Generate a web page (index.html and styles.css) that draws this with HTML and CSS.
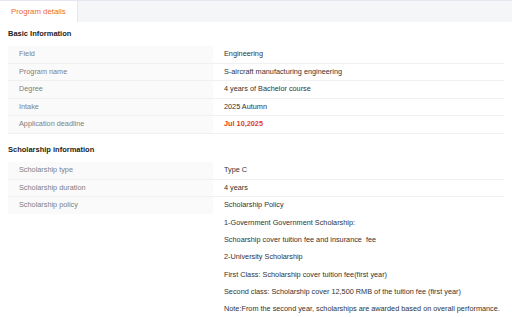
FILE: index.html
```html
<!doctype html>
<html lang="en">
  <head>
    <meta charset="UTF-8" />
    <title>Program details</title>
    <link rel="stylesheet" href="styles.css">
  </head>
  <body>
    <div class="tabs">
      <div class="tab active">Program details</div>
    </div>
    <main>
      <h3 class="section-title">Basic Information</h3>
      <div class="info-table">
        <div class="row">
          <span class="label">Field</span>
          <span class="value">Engineering</span>
        </div>
        <div class="row">
          <span class="label">Program name</span>
          <span class="value">S-aircraft manufacturing engineering</span>
        </div>
        <div class="row">
          <span class="label">Degree</span>
          <span class="value">4 years of Bachelor course</span>
        </div>
        <div class="row">
          <span class="label">Intake</span>
          <span class="value">2025 Autumn</span>
        </div>
        <div class="row">
          <span class="label">Application deadline</span>
          <span class="value deadline">Jul 10,2025</span>
        </div>
      </div>
      <h3 class="section-title">Scholarship information</h3>
      <div class="info-table">
        <div class="row">
          <span class="label">Scholarship type</span>
          <span class="value">Type C</span>
        </div>
        <div class="row">
          <span class="label">Scholarship duration</span>
          <span class="value">4 years</span>
        </div>
        <div class="row last">
          <span class="label">Scholarship policy</span>
          <div class="value policy">
            <p>Scholarship Policy</p>
            <p>1-Government Government Scholarship:</p>
            <p>Schoarship cover tuition fee and insurance &nbsp;fee</p>
            <p>2-University Scholarship</p>
            <p>First Class: Scholarship cover tuition fee(first year)</p>
            <p>Second class: Scholarship cover 12,500 RMB of the tuition fee (first year)</p>
            <p>Note:From the second year, scholarships are awarded based on overall performance.</p>
          </div>
        </div>
      </div>
    </main>
  </body>
</html>
```
FILE: styles.css
```css
* {
  margin: 0;
  padding: 0;
  box-sizing: border-box;
}
body {
  font-family: "Liberation Sans", Arial, sans-serif;
  font-size: 7.3px;
  color: #333;
  background-color: #fff;
}
.tabs {
  display: flex;
  height: 22px;
  background-color: #f5f6f8;
  border-top: 1px solid #e4e7ed;
}
.tab {
  padding: 0 11px;
  line-height: 21px;
  font-size: 7.8px;
  color: #999;
  border-right: 1px solid #e4e7ed;
}
.tab.active {
  background-color: #fff;
  color: #ec6a2c;
}
main {
  padding: 0 8px;
}
.section-title {
  font-size: 7.5px;
  font-weight: bold;
  color: #222;
  line-height: 18px;
  padding: 3px 0;
}
.info-table {
  margin-bottom: 4.3px;
}
.info-table:last-child {
  margin-bottom: 0;
  border-bottom: 1px solid #e8e8e8;
}
.row {
  display: grid;
  grid-template-columns: 205px 1fr;
  border-bottom: 1px solid #f0f0f0;
}
.row.last {
  border-bottom: none;
}
.row .label {
  align-self: start;
  height: 16.6px;
  line-height: 16.6px;
  padding-left: 11px;
  color: #808080;
  background-color: #fafafa;
}
.row .value {
  line-height: 16.6px;
  padding-left: 11px;
}
.row .deadline {
  color: #e03e1c;
  font-weight: bold;
}
.policy p {
  line-height: 17.2px;
}
.policy p:first-child {
  line-height: 16.6px;
}
```
